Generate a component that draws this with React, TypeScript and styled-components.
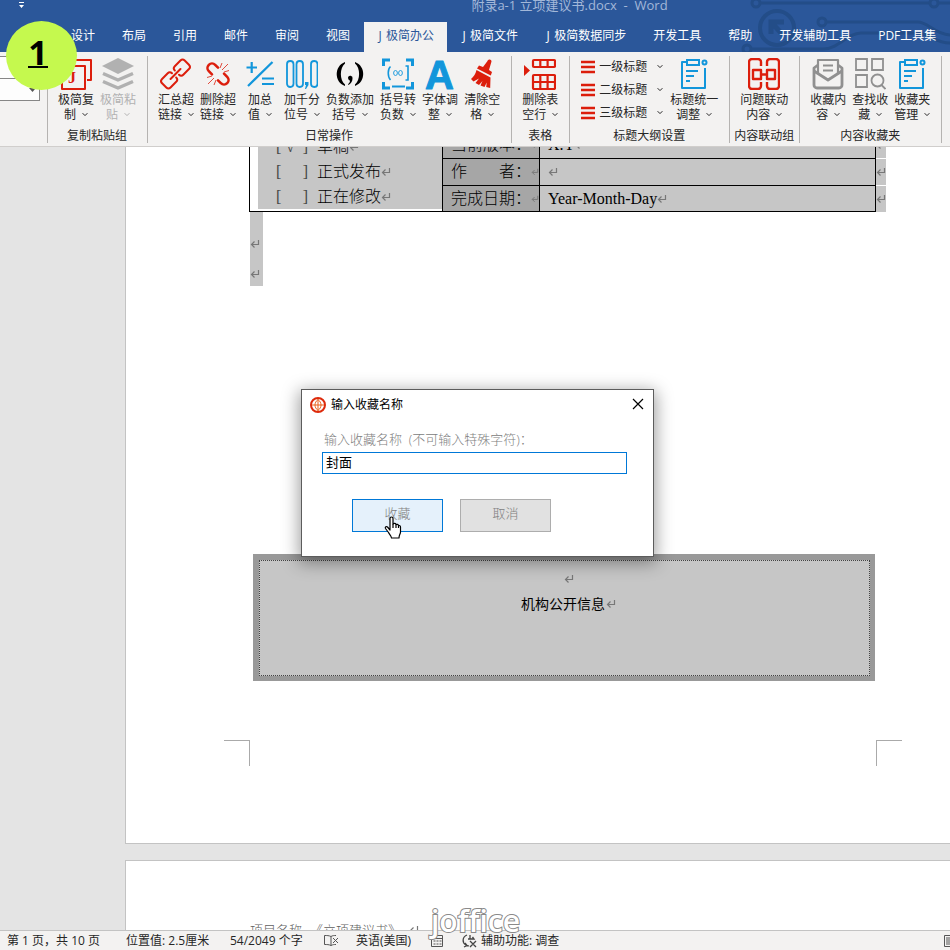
import React from "react";
import styled, { createGlobalStyle, css } from "styled-components";

const UI = `"Open Sans", "Noto Sans CJK SC", sans-serif`;
const RED = "#dc1e0c";
const BLUE = "#1296db";
const GREY = "#909090";

const Global = createGlobalStyle`
  * { box-sizing: border-box; }
  html, body, #root { height: 100%; }
  body { margin: 0; overflow: hidden; font: 12px/16px ${UI}; color: #262626; }
  button, input { font: inherit; color: inherit; margin: 0; }
`;

const Shell = styled.div`
  position: relative;
  display: flex;
  flex-direction: column;
  height: 100vh;
  overflow: hidden;
`;

/* ---------- title and tabs ---------- */

const Header = styled.header`
  position: relative;
  flex: none;
  background: #2b579a;
  color: #fff;
`;

const HeaderArt = styled.svg`
  position: absolute;
  top: 0;
  right: 0;
`;

const TitleRow = styled.div`
  position: relative;
  display: flex;
  align-items: flex-start;
  height: 22px;
`;

const QuickAccess = styled.button`
  width: 43px;
  height: 12px;
  padding: 0;
  border: 0;
  background: none;
  display: flex;
  justify-content: center;
`;

const DocTitle = styled.h1`
  flex: 1;
  margin: -4px 0 0;
  padding-left: 146px;
  text-align: center;
  font-size: 13px;
  font-weight: 400;
  line-height: 18px;
  color: #a3b8d9;
  white-space: pre;
`;

const Tabs = styled.nav`
  position: relative;
  display: flex;
  gap: 1px;
  padding-left: 58px;
  white-space: nowrap;
`;

const Tab = styled.button<{ $active?: boolean }>`
  height: 30px;
  padding: 0 13px 2px;
  border: 0;
  white-space: nowrap;
  background: ${(p) => (p.$active ? "#f3f2f1" : "transparent")};
  color: ${(p) => (p.$active ? "#2b579a" : "#fff")};
`;

const TabMark = styled.span`
  display: inline-block;
  min-width: 9px;
  white-space: pre;
`;

/* ---------- ribbon ---------- */

const Ribbon = styled.div`
  flex: none;
  display: flex;
  height: 95px;
  padding: 4px 0 3px;
  background: #f3f2f1;
  border-bottom: 1px solid #d0cecc;
`;

const GalleryEdge = styled.div`
  width: 48px;
  flex: none;
  border-right: 1px solid #b5b3b1;
`;

const GalleryButton = styled.button`
  display: flex;
  align-items: center;
  justify-content: flex-end;
  width: 40px;
  height: 23px;
  padding: 0 3px;
  border: 1px solid #868686;
  border-left: 0;
  background: #fdfdfd;
  & + & { margin-top: -1px; }
`;

const Group = styled.section`
  flex: none;
  display: flex;
  flex-direction: column;
  padding: 0 8px 0 7px;
  border-right: 1px solid #b5b3b1;
`;

const GroupTools = styled.div`
  display: flex;
  flex: 1;
`;

const GroupName = styled.h2`
  display: flex;
  justify-content: center;
  margin: 0 -6px;
  font-size: 12px;
  font-weight: 400;
  line-height: 14px;
  white-space: nowrap;
`;

const Tool = styled.button`
  display: flex;
  flex-direction: column;
  align-items: center;
  min-width: 42px;
  padding: 2px 3px 0;
  border: 0;
  background: none;
  line-height: 15px;
  white-space: nowrap;
  &:disabled { color: #b1b1b1; }
  > svg { margin-bottom: 2px; }
`;

const ToolLine = styled.span`
  display: flex;
  align-items: center;
  gap: 6px;
`;

const LevelList = styled.div`
  display: flex;
  flex-direction: column;
  width: 90px;
  margin-top: -1px;
`;

const LevelButton = styled.button`
  display: flex;
  align-items: center;
  height: 23px;
  padding: 0 4px;
  border: 0;
  background: none;
  gap: 4px;
  > :last-child { margin-left: auto; }
`;

/* ---------- document ---------- */

const Workspace = styled.main`
  flex: 1;
  min-height: 0;
  overflow: hidden;
  display: flex;
  flex-direction: column;
  gap: 16px;
  padding-left: 125px;
  background: #e4e4e4;
`;

const Page = styled.article<{ $next?: boolean }>`
  flex: none;
  padding: 0 74px 0 123px;
  background: #fff;
  border: 0 solid #c3c3c3;
  border-left-width: 1px;
  ${(p) => (p.$next ? css`border-top-width: 1px; height: 110px;` : css`border-bottom-width: 1px;`)}
`;

const TableView = styled.div`
  display: flex;
  align-items: flex-end;
  height: 65px;
  overflow: hidden;
  margin-right: -10px;
`;

const CoverTable = styled.table`
  flex: 1;
  border-collapse: collapse;
  table-layout: fixed;
  font: 300 16px/24px "Liberation Serif", "Noto Sans CJK SC", serif;
  color: #000;
  td, th { padding: 0; font-weight: 300; text-align: left; white-space: pre; overflow: hidden; }
`;

const StateCell = styled.td`
  width: 193px;
  border: 1px solid #000;
  vertical-align: bottom;
`;

const StateList = styled.div`
  margin: 0 0 2px 8px;
  background: #c6c6c6;
`;

const StateLine = styled.label`
  display: flex;
  align-items: center;
  height: 25px;
  padding-left: 18px;
  input { position: absolute; opacity: 0; pointer-events: none; }
`;

const Bracket = styled.span`
  width: 41px;
  display: flex;
  align-items: center;
  color: #444;
  &::before { content: "["; width: 10px; }
  &::after { content: "]"; margin-left: auto; margin-right: 9px; }
`;

const NameCell = styled.th`
  width: 97px;
  height: 27px;
  border: 1px solid #000;
  background: #a6a6a6;
  tr:last-child > & { height: 26px; }
  > span { display: flex; align-items: center; margin-left: 8px; width: 88px; }
  svg { margin-left: auto; }
`;

const ValueCell = styled.td`
  border: 1px solid #000;
  background: #c6c6c6;
  > span { display: flex; align-items: center; margin-left: 8px; }
`;

const RowEnd = styled.td`
  width: 11px;
  border-top: 1px solid #fff;
  background: #c6c6c6;
  svg { display: block; }
`;

const EmptyLines = styled.div`
  display: flex;
  flex-direction: column;
  align-items: flex-start;
  gap: 20px;
  width: 13px;
  height: 74px;
  margin-left: 1px;
  padding-top: 27px;
  background: #c6c6c6;
`;

const InfoBox = styled.section`
  margin: 268px 1px 0 4px;
  padding: 6px 5px 5px 6px;
  background: #999;
`;

const InfoInner = styled.div`
  display: flex;
  flex-direction: column;
  align-items: center;
  height: 116px;
  padding: 13px 0 0 8px;
  border: 1px dotted #444;
  background: #c6c6c6;
  color: #000;
  font-size: 14px;
  line-height: 20px;
`;

const InfoText = styled.p`
  display: flex;
  align-items: center;
  margin: 10px 0 0;
  gap: 1px;
`;

const Crops = styled.div`
  display: flex;
  justify-content: space-between;
  margin: 59px -26px 0 -25px;
  padding-bottom: 77px;
`;

const Crop = styled.span<{ $side: "left" | "right" }>`
  width: 26px;
  height: 26px;
  border-top: 1px solid #aaa;
  ${(p) => (p.$side === "left" ? css`border-right: 1px solid #aaa;` : css`border-left: 1px solid #aaa;`)}
`;

const PageHeading = styled.p`
  display: flex;
  align-items: center;
  gap: 8px;
  margin: 0;
  padding: 59px 0 0 1px;
  font-size: 13px;
  font-weight: 300;
  line-height: 20px;
  color: #606060;
`;

/* ---------- status bar ---------- */

const StatusBar = styled.footer`
  flex: none;
  display: flex;
  align-items: center;
  height: 20px;
  padding-left: 7px;
  background: #f3f2f1;
  border-top: 1px solid #c3c3c3;
  white-space: pre;
`;

const StatusItem = styled.span<{ $w: number }>`
  display: flex;
  align-items: center;
  gap: 4px;
  flex: none;
  width: ${(p) => p.$w}px;
`;

const StatusEnd = styled.span`
  margin-left: auto;
  width: 6px;
  height: 12px;
  overflow: hidden;
`;

/* ---------- things that float above ---------- */

const StepBadge = styled.div`
  position: absolute;
  left: 6px;
  top: 21px;
  width: 71px;
  height: 69px;
  border-radius: 50%;
  background: #c5f94e;
  display: flex;
  justify-content: center;
  padding-top: 8px;
  padding-right: 7px;
`;

const StepNumber = styled.strong`
  height: 39px;
  border-bottom: 2px solid #000;
  font-size: 34px;
  line-height: 46px;
  font-weight: 700;
  color: #000;
`;

const Watermark = styled.div`
  position: absolute;
  left: 431px;
  bottom: 9px;
  font: 600 30px/40px "Open Sans", sans-serif;
  color: #fff;
  -webkit-text-stroke: 2px #8a8a8a;
  paint-order: stroke fill;
`;

const Dialog = styled.div`
  position: absolute;
  left: 301px;
  top: 389px;
  width: 353px;
  padding-bottom: 24px;
  border: 1px solid #5c5c5c;
  background: #fff;
  box-shadow: 0 4px 16px 2px rgba(0, 0, 0, 0.38);
  color: #808080;
  font-size: 13px;
`;

const DialogBar = styled.div`
  display: flex;
  align-items: center;
  gap: 5px;
  height: 29px;
  padding: 0 8px;
  color: #000;
  font-size: 12px;
`;

const CloseButton = styled.button`
  display: flex;
  margin-left: auto;
  padding: 0 1px 2px;
  border: 0;
  background: none;
`;

const Field = styled.div`
  display: flex;
  flex-direction: column;
  padding: 12px 26px 0 20px;
  label { padding-left: 2px; line-height: 16px; white-space: pre; font-weight: 300; }
  input {
    height: 22px;
    margin-top: 5px;
    padding: 0 3px 4px;
    border: 1px solid #0078d7;
    border-radius: 0;
    background: #fff;
    color: #000;
    line-height: 16px;
    outline: 0;
  }
`;

const Actions = styled.div`
  display: flex;
  gap: 17px;
  padding: 25px 50px 0;
`;

const Action = styled.button<{ $hot?: boolean }>`
  width: 91px;
  height: 33px;
  padding: 0 0 5px;
  font-weight: 300;
  border: 1px solid ${(p) => (p.$hot ? "#0078d7" : "#adadad")};
  background: ${(p) => (p.$hot ? "#e5f1fb" : "#e1e1e1")};
`;

const Pointer = styled.svg`
  position: absolute;
  left: 384px;
  top: 516px;
`;

/* ---------- drawings ---------- */

const Caret = () => (
  <svg width="6" height="5" viewBox="0 0 6 5" fill="none" stroke="currentColor"><path d="M.6 1.2 3 3.6 5.4 1.2" /></svg>
);

const Return = () => (
  <svg width="10" height="10" viewBox="0 0 10 10" fill="none" stroke="#777" strokeWidth="1.2">
    <path d="M8.5 1v4.5H1.5M4.5 2.5l-3 3 3 3" />
  </svg>
);

const Icon = ({ children }: { children: React.ReactNode }) => (
  <svg width="32" height="32" viewBox="0 0 32 32" fill="none">{children}</svg>
);

const icons = {
  copy: (
    <Icon>
      <g stroke={RED} strokeWidth="2" strokeLinejoin="round">
        <path d="M8 5V2h23v20h-4" /><rect x="2" y="8" width="23" height="23" />
      </g>
      <text x="8" y="25" fill={RED} fontFamily="Liberation Serif" fontWeight="700" fontSize="16">J</text>
    </Icon>
  ),
  layers: (
    <Icon>
      <path d="M16 0 32 8 16 16 0 8Z" fill="#b1b1b1" />
      <path d="M1 15.5 16 22l15-6.5M1 23.5 16 30l15-6.5" stroke="#b1b1b1" strokeWidth="3.4" strokeLinejoin="round" />
    </Icon>
  ),
  link: (
    <Icon>
      <g transform="translate(15.5 16) rotate(-45)" stroke={RED} strokeWidth="2" strokeLinecap="round">
        <path d="M-7 0H7M-2 3c0 2-1.200 3-3 3h-8a3 3 0 0 1-3-3v-6a3 3 0 0 1 3-3h8c1.800 0 3 1 3 3" />
        <path d="M2-3c0-2 1.200-3 3-3h8a3 3 0 0 1 3 3v6a3 3 0 0 1-3 3H5c-1.800 0-3-1-3-3" />
      </g>
    </Icon>
  ),
  unlink: (
    <Icon>
      <g transform="translate(16 16) rotate(45)" stroke={RED} strokeWidth="2.600" strokeLinecap="round">
        <path d="M-4 4.500h-4.500a4.500 4.500 0 0 1 0-9h4M4-4.500h4.500a4.500 4.500 0 0 1 0 9h-4" />
      </g>
      <path d="M18 10 20 5M20 12l6-6M22 14l5-1.500M14 22l-2 5M12 20l-6 6M10 18l-5 1.500" stroke={RED} strokeWidth=".8" />
    </Icon>
  ),
  sum: (
    <Icon>
      <path d="M2.500 9.500H13M7.700 4v11M28.500 4 4 28M18 20.500h12M18 26h12" stroke={BLUE} strokeWidth="2.200" />
    </Icon>
  ),
  thousands: (
    <Icon>
      <g stroke={BLUE} strokeWidth="1.800">
        <rect x="1" y="3" width="6.500" height="26" rx="3.200" /><rect x="10.500" y="3" width="6.500" height="26" rx="3.200" />
        <rect x="25" y="3" width="6.500" height="26" rx="3.200" />
      </g>
      <path d="M19 24h3.500v3L20 31h-1l1-4h-1z" fill={BLUE} />
    </Icon>
  ),
  negative: (
    <Icon>
      <path d="M11 4C0 8 0 24 11 28v-1.500C5.500 22 5.500 10 11 5.500ZM21 4c11 4 11 20 0 24v-1.500c5.500-4.500 5.500-16.500 0-21Z" fill="#000" />
      <path d="M14 19.500a2.300 2.300 0 1 1 4.500 1c0 3-1.500 5-4 6.500l-.5-.8c1.500-1.200 2-2.400 2-3.700-1.200-.2-2-1.500-2-3Z" fill="#000" />
    </Icon>
  ),
  brackets: (
    <Icon>
      <path d="M1.500 8V2H8M24 2h6.500v6M1.500 24v6H8M24 30h6.500v-6" stroke={BLUE} strokeWidth="3" />
      <path d="M10 28.500h13" stroke={BLUE} strokeWidth="2" />
      <path d="M8.500 8.500C5.500 11 5.500 19 8.500 22M23.500 8H26v14h-2.500" stroke={BLUE} strokeWidth="1.600" />
      <g stroke={BLUE} strokeWidth=".9"><ellipse cx="13.500" cy="15" rx="1.900" ry="2.500" /><ellipse cx="18.500" cy="15" rx="1.900" ry="2.500" /></g>
    </Icon>
  ),
  font: (
    <Icon>
      <text x="15.500" y="31" textAnchor="middle" fill={BLUE} stroke={BLUE} strokeWidth="1" strokeLinejoin="round" fontFamily="Liberation Sans" fontWeight="700" fontSize="40">A</text>
    </Icon>
  ),
  broom: (
    <Icon>
      <path d="M20.500 3c.6-2.200 4.200-2 4 .5L22 12l3 2-1.200 3.500L10 10.500l2-3 4 1.500Z" fill={RED} transform="translate(1 0)" />
      <path d="m10.500 12 14 7.500-.3 10.500-4-1 .5-4.500-2.200 4.500-4-1.500 2-4.500-3.500 4-3.500-2 3.500-4.500-5.500 3L5 21c3-2.500 4.500-5 5.500-9Z" fill={RED} />
    </Icon>
  ),
  table: (
    <Icon>
      <path d="m0 7 6 5.500L0 18Z" fill={RED} />
      <g stroke={RED} strokeWidth="2.200">
        <rect x="9" y="2" width="22" height="7" rx="1" /><path d="M16.300 2v7M23.600 2v7" />
        <rect x="9" y="17" width="22" height="14" rx="1" /><path d="M16.300 17v14M23.600 17v14M9 24h22" />
      </g>
    </Icon>
  ),
  clipboard: (
    <Icon>
      <g stroke={BLUE} strokeWidth="2">
        <path d="M8 4H4v26h23V10" strokeLinejoin="round" /><rect x="9" y="2" width="12" height="5" /><circle cx="26.500" cy="4.500" r="2" />
        <path d="M8 13h12M8 18h8M8 23h4" strokeWidth="1.800" />
      </g>
    </Icon>
  ),
  frames: (
    <Icon>
      <g stroke={RED} strokeWidth="2.400" strokeLinejoin="round">
        <path d="M13 8V4a3 3 0 0 0-3-3H4a3 3 0 0 0-3 3v24a3 3 0 0 0 3 3h6a3 3 0 0 0 3-3v-4M19 8V4a3 3 0 0 1 3-3h6a3 3 0 0 1 3 3v24a3 3 0 0 1-3 3h-6a3 3 0 0 1-3-3v-4" />
        <path d="M5 12h8v9H5zM19 12h8v9h-8zM13 16.500h6" />
      </g>
    </Icon>
  ),
  envelope: (
    <Icon>
      <g stroke={GREY} strokeWidth="2.800" strokeLinejoin="round">
        <path d="M6 7 2 10v17a3 3 0 0 0 3 3h22a3 3 0 0 0 3-3V10l-4-3" /><path d="M2 13 16 22l14-9" />
        <path d="M6 15V2h20v13M11 7.500h10M11 12.500h10" strokeWidth="2.200" />
      </g>
    </Icon>
  ),
  search: (
    <Icon>
      <g stroke={GREY} strokeWidth="1.800">
        <path d="M2 1h11v11H2zM18 1h11v11H18zM2 17h11v12H2z" /><circle cx="23.500" cy="22.500" r="6" /><path d="m27.500 27 4 4" />
      </g>
    </Icon>
  ),
};

type ToolData = [keyof typeof icons, string, string, boolean?];

const RibbonTool = ({ data: [icon, top, bottom, off] }: { data: ToolData }) => (
  <Tool type="button" disabled={off}>
    {icons[icon]}
    <span>{top}</span>
    <ToolLine>{bottom}<Caret /></ToolLine>
  </Tool>
);

const ToolGroup = ({ name, tools, children }: { name: string; tools: ToolData[]; children?: React.ReactNode }) => (
  <Group aria-label={name}>
    <GroupTools>{children}{tools.map((t) => <RibbonTool key={t[1]} data={t} />)}</GroupTools>
    <GroupName>{name}</GroupName>
  </Group>
);

const tabs = ["设计", "布局", "引用", "邮件", "审阅", "视图", "J 极简办公", "J 极简文件", "J 极简数据同步", "开发工具", "帮助", "开发辅助工具", "PDF工具集"];

const daily: ToolData[] = [
  ["link", "汇总超", "链接"], ["unlink", "删除超", "链接"], ["sum", "加总", "值"], ["thousands", "加千分", "位号"],
  ["negative", "负数添加", "括号"], ["brackets", "括号转", "负数"], ["font", "字体调", "整"], ["broom", "清除空", "格"],
];

const states = [["草稿", true], ["正式发布", false], ["正在修改", false]] as const;

const fields = [["当前版本：", "X.Y"], ["作　　者：", ""], ["完成日期：", "Year-Month-Day"]];

export default function App() {
  return (
    <Shell>
      <Global />
      <Header>
        <HeaderArt width="210" height="52" viewBox="0 0 210 52" fill="none" stroke="#234d88" strokeWidth="3">
          <circle cx="16" cy="3" r="4" /><path d="M20 3h170" /><circle cx="194" cy="3" r="4" /><path d="M198 3h12" />
          <circle cx="37" cy="28" r="17" strokeWidth="4" />
          <path d="M43 35 31 22M31 34V22h13" strokeWidth="5" />
          <circle cx="82" cy="22" r="4" /><path d="M86 22h92c10 0 16 12 32 13" />
          <circle cx="7" cy="49" r="4" /><path d="M11 49h72c16 0 24-16 38-16h56c12 0 18 10 33 10" />
        </HeaderArt>
        <TitleRow>
          <QuickAccess type="button" aria-label="自定义快速访问工具栏">
            <svg width="7" height="9" viewBox="0 0 7 9" fill="#fff"><path d="M1 2h5v1H1zM1 5h5L3.500 8z" /></svg>
          </QuickAccess>
          <DocTitle>{"附录a-1 立项建议书.docx  -  Word"}</DocTitle>
        </TitleRow>
        <Tabs>
          {tabs.map((t) => (
            <Tab key={t} type="button" $active={t === "J 极简办公"}>
              {t.startsWith("J ") ? <><TabMark>{"J "}</TabMark>{t.slice(2)}</> : t}
            </Tab>
          ))}
        </Tabs>
      </Header>

      <Ribbon>
        <GalleryEdge>
          <GalleryButton type="button" aria-label="上一行" />
          <GalleryButton type="button" aria-label="其他">
            <svg width="7" height="4" fill="#555"><path d="M0 0h7L3.500 4z" /></svg>
          </GalleryButton>
        </GalleryEdge>
        <ToolGroup name="复制粘贴组" tools={[["copy", "极简复", "制"], ["layers", "极简粘", "贴", true]]} />
        <ToolGroup name="日常操作" tools={daily} />
        <ToolGroup name="表格" tools={[["table", "删除表", "空行"]]} />
        <ToolGroup name="标题大纲设置" tools={[["clipboard", "标题统一", "调整"]]}>
          <LevelList>
            {["一级标题", "二级标题", "三级标题"].map((t) => (
              <LevelButton key={t} type="button">
                <svg width="14" height="14" stroke={RED} strokeWidth="2.600"><path d="M0 2h14M0 7h14M0 12h14" /></svg>
                <span>{t}</span>
                <Caret />
              </LevelButton>
            ))}
          </LevelList>
        </ToolGroup>
        <ToolGroup name="内容联动组" tools={[["frames", "问题联动", "内容"]]} />
        <ToolGroup name="内容收藏夹" tools={[["envelope", "收藏内", "容"], ["search", "查找收", "藏"], ["clipboard", "收藏夹", "管理"]]} />
      </Ribbon>

      <Workspace>
        <Page>
          <TableView>
            <CoverTable>
              <tbody>
                {fields.map(([name, value], i) => (
                  <tr key={name}>
                    {i === 0 && (
                      <StateCell rowSpan={3}>
                        <StateList>
                          {states.map(([s, on]) => (
                            <StateLine key={s}>
                              <input type="checkbox" defaultChecked={on} />
                              <Bracket>{on ? "√" : ""}</Bracket>{s}<Return />
                            </StateLine>
                          ))}
                        </StateList>
                      </StateCell>
                    )}
                    <NameCell scope="row"><span>{name}<Return /></span></NameCell>
                    <ValueCell><span>{value}<Return /></span></ValueCell>
                    <RowEnd><Return /></RowEnd>
                  </tr>
                ))}
              </tbody>
            </CoverTable>
          </TableView>
          <EmptyLines><Return /><Return /></EmptyLines>
          <InfoBox>
            <InfoInner>
              <Return />
              <InfoText>机构公开信息<Return /></InfoText>
            </InfoInner>
          </InfoBox>
          <Crops><Crop $side="left" /><Crop $side="right" /></Crops>
        </Page>
        <Page $next>
          <PageHeading><span>项目名称</span><span>《立项建议书》</span><Return /></PageHeading>
        </Page>
      </Workspace>

      <StatusBar>
        <StatusItem $w={119}>第 1 页，共 10 页</StatusItem>
        <StatusItem $w={104}>位置值: 2.5厘米</StatusItem>
        <StatusItem $w={94}>54/2049 个字</StatusItem>
        <StatusItem $w={32}>
          <svg width="15" height="13" fill="none" stroke="#555"><path d="M7 2.500C5 1.500 3 1.500.5 1.500v9c2.500 0 4.500 0 6.500 1v-9c1.500-1 3-1 5-1M7 11.500c2-1 3-1 5-1M9 4l5 5M14 4 9 9" /></svg>
        </StatusItem>
        <StatusItem $w={75}>英语(美国)</StatusItem>
        <StatusItem $w={31}>
          <svg width="13" height="13" fill="none" stroke="#555"><path d="M.5 1.500h11v11H.5zM.5 4.500h11M2.500 7h2M5.500 7h2M8.500 7h2M2.500 10h2M5.500 10h2M8.500 10h2" /></svg>
        </StatusItem>
        <StatusItem $w={110}>
          <svg width="15" height="14" fill="none" stroke="#444" strokeWidth="1.300"><path d="M5 1C0 3 0 9 4 11l3 1M3 9l2 2.500L2 13M8 1v4M6 5h6l-1.500-2M8 7l6 6M14 7l-6 6" /></svg>
          辅助功能: 调查
        </StatusItem>
        <StatusEnd>
          <svg width="12" height="12" fill="none" stroke="#555"><path d="M.5.5h11v11H.5zM2 3h8M2 5h8M2 7h8M2 9h8" /></svg>
        </StatusEnd>
      </StatusBar>

      <StepBadge><StepNumber>1</StepNumber></StepBadge>
      <Watermark>joffice</Watermark>

      <Dialog role="dialog" aria-labelledby="fav-title">
        <DialogBar>
          <svg width="16" height="16" viewBox="0 0 16 16" fill="none">
            <circle cx="8" cy="8" r="7" fill="#fff" stroke="#dd2a0c" strokeWidth="2" />
            <path d="M8 2v12M2 8h12M8 2.500C4 5.500 4 10.500 8 13.500 12 10.500 12 5.500 8 2.500" stroke="#e9621c" />
          </svg>
          <span id="fav-title">输入收藏名称</span>
          <CloseButton type="button" aria-label="关闭">
            <svg width="12" height="12" stroke="#000" strokeWidth="1.200"><path d="m1 1 10 10M11 1 1 11" /></svg>
          </CloseButton>
        </DialogBar>
        <Field>
          <label htmlFor="fav-name">{"输入收藏名称  (不可输入特殊字符)："}</label>
          <input id="fav-name" type="text" defaultValue="封面" />
        </Field>
        <Actions>
          <Action type="button" $hot>收藏</Action>
          <Action type="button">取消</Action>
        </Actions>
      </Dialog>

      <Pointer width="18" height="24" viewBox="0 0 18 24" fill="#fff" stroke="#000" strokeWidth="1.200" strokeLinejoin="round">
        <path d="M6 14V2.500c0-2 3-2 3 0V8c1-1 3-.8 3 .7.800-.8 2.500-.3 2.500 1 .9-.5 2 0 2 1.300v5c0 2-1.500 3-1.500 6H7.500c0-2-2-3.500-3-5.500L1.500 12.500c-.8-1.500 1-2.500 2-1.500Z" />
        <path d="M9 8v4M12 8.700V12M14.500 9.700V12" />
      </Pointer>
    </Shell>
  );
}
